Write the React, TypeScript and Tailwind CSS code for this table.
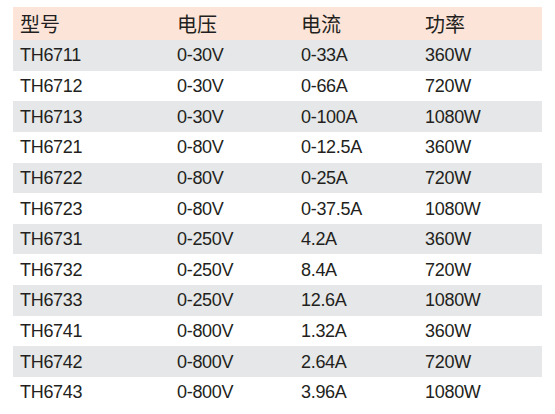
import React from "react";

const rows: [string, string, string, string][] = [
  ["TH6711", "0-30V", "0-33A", "360W"],
  ["TH6712", "0-30V", "0-66A", "720W"],
  ["TH6713", "0-30V", "0-100A", "1080W"],
  ["TH6721", "0-80V", "0-12.5A", "360W"],
  ["TH6722", "0-80V", "0-25A", "720W"],
  ["TH6723", "0-80V", "0-37.5A", "1080W"],
  ["TH6731", "0-250V", "4.2A", "360W"],
  ["TH6732", "0-250V", "8.4A", "720W"],
  ["TH6733", "0-250V", "12.6A", "1080W"],
  ["TH6741", "0-800V", "1.32A", "360W"],
  ["TH6742", "0-800V", "2.64A", "720W"],
  ["TH6743", "0-800V", "3.96A", "1080W"],
];

export default function App() {
  return (
    <div className="w-[555px] h-[414px] bg-white pt-[7px] pl-[13px] text-[#231f20] font-['Liberation_Sans','Noto_Sans_CJK_SC',sans-serif]">
      <div className="w-[529px]">
        <div className="grid grid-cols-[164px_124px_124px_1fr] h-[33px] bg-[#fde4d9] items-center pt-[1px] text-[20px] font-['Noto_Sans_CJK_SC',sans-serif] leading-none">
          <div className="pl-[7px]">型号</div>
          <div>电压</div>
          <div>电流</div>
          <div>功率</div>
        </div>
        {rows.map((r, i) => (
          <div
            key={r[0]}
            className={`grid grid-cols-[164px_124px_124px_1fr] h-[30.65px] items-center text-[18px] leading-none tracking-[-0.3px] ${
              i % 2 === 0 ? "bg-[#e6e7e8]" : "bg-white"
            }`}
          >
            <div className="pl-[7px]">{r[0]}</div>
            <div>{r[1]}</div>
            <div>{r[2]}</div>
            <div>{r[3]}</div>
          </div>
        ))}
      </div>
    </div>
  );
}
